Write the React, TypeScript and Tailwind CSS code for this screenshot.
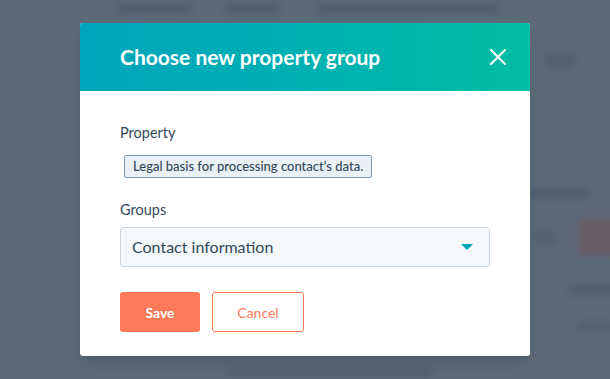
const font = { fontFamily: "Lato, 'Open Sans', sans-serif" };

export default function App() {
  return (
    <div
      className="relative w-[610px] h-[379px] overflow-hidden bg-[#5b6979]"
      style={font}
    >
      {/* Blurred page behind the overlay */}
      <div className="absolute inset-0 blur-[3px] pointer-events-none">
        <div className="absolute left-[118px] top-[4px] w-[75px] h-[9px] rounded bg-[#4f5f70]" />
        <div className="absolute left-[225px] top-[4px] w-[55px] h-[9px] rounded bg-[#4f5f70]" />
        <div className="absolute left-[318px] top-[4px] w-[180px] h-[9px] rounded bg-[#4f5f70]" />
        <div className="absolute left-[545px] top-[55px] w-[30px] h-[12px] rounded bg-[#52616f]" />
        <div className="absolute left-[528px] top-[190px] w-[60px] h-[8px] rounded bg-[#4d5e6f]" />
        <div className="absolute left-[578px] top-[218px] w-[40px] h-[38px] rounded bg-[#6a5e66]" />
        <div className="absolute left-[535px] top-[230px] w-[20px] h-[14px] rounded bg-[#52616f]" />
        <div className="absolute left-[568px] top-[286px] w-[50px] h-[8px] rounded bg-[#4d5e6f]" />
        <div className="absolute left-[578px] top-[322px] w-[40px] h-[8px] rounded bg-[#52616f]" />
        <div className="absolute left-[230px] top-[368px] w-[200px] h-[8px] rounded bg-[#4f5f70]" />
      </div>

      <div className="relative flex justify-center pt-[23px]">
        <div className="w-[450px] rounded-[3px] overflow-hidden bg-white shadow-lg">
          {/* Header */}
          <div className="h-[68px] flex items-center justify-between pl-10 pr-[24px] bg-gradient-to-r from-[#00a4bd] to-[#00bda5]">
            <h2 className="text-[21px] font-bold text-white">
              Choose new property group
            </h2>
            <svg width="16" height="16" viewBox="0 0 16 16">
              <path
                d="M1 1 L15 15 M15 1 L1 15"
                stroke="white"
                strokeWidth="2"
                strokeLinecap="square"
              />
            </svg>
          </div>

          {/* Body */}
          <div className="px-10 pt-8 pb-6 text-[#33475b]">
            <div className="text-[14.5px] leading-5">Property</div>
            <div className="mt-3 ml-1 inline-flex h-[23px] items-center px-2 border border-[#7c98b6] bg-[#eaf0f6] text-[13px] font-medium rounded-[2px]">
              Legal basis for processing contact's data.
            </div>

            <div className="mt-[22px] text-[14.5px] leading-5">Groups</div>
            <div className="mt-[7px] h-10 flex items-center justify-between pl-[11px] pr-4 border border-[#cbd6e2] bg-[#f5f8fa] rounded-[3px]">
              <span className="text-[16px]">Contact information</span>
              <svg width="12" height="6" viewBox="0 0 12 6">
                <path d="M0 0 L12 0 L6 6 Z" fill="#00a4bd" />
              </svg>
            </div>

            <div className="mt-[25px] flex gap-3">
              <button className="w-20 h-10 rounded-[3px] bg-[#ff7a59] text-white text-[14px] font-bold">
                Save
              </button>
              <button className="w-[92px] h-10 rounded-[3px] border border-[#ff7a59] bg-white text-[#ff7a59] text-[14px]">
                Cancel
              </button>
            </div>
          </div>
        </div>
      </div>
    </div>
  );
}
